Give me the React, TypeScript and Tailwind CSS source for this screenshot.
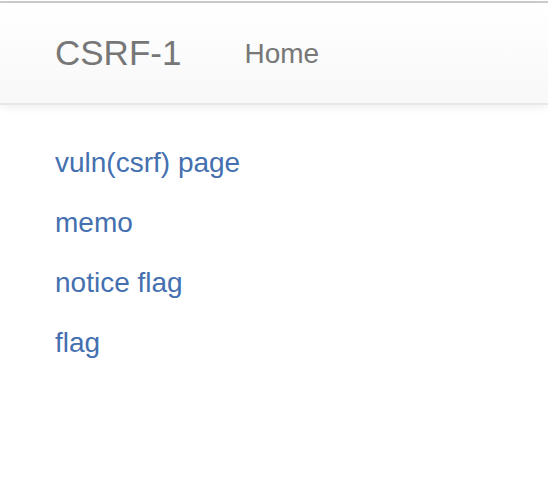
const links = ['vuln(csrf) page', 'memo', 'notice flag', 'flag'];

export default function App() {
  return (
    <div className="min-h-[478px] bg-white font-['Liberation_Sans',Arial,sans-serif]">
      <div className="h-px bg-white" />
      <div className="h-[2px] bg-[#cccccc]" />
      {/* navbar */}
      <nav className="h-[102px] border-b-2 border-[#e7e7e7] bg-gradient-to-b from-white to-[#f8f8f8] shadow-[0_3px_8px_rgba(0,0,0,0.06)]">
        <div className="flex h-full items-center px-[55px]">
          <a className="text-[35px] text-[#777777]">CSRF-1</a>
          <a className="ml-[63px] mt-px text-[28px] text-[#777777]">Home</a>
        </div>
      </nav>

      <div className="px-[55px] pt-[38px]">
        {links.map(l => (
          <p key={l} className="mb-[20px] text-[28px] leading-[40px]">
            <a className="text-[#4470b0]">{l}</a>
          </p>
        ))}
      </div>
    </div>
  );
}
